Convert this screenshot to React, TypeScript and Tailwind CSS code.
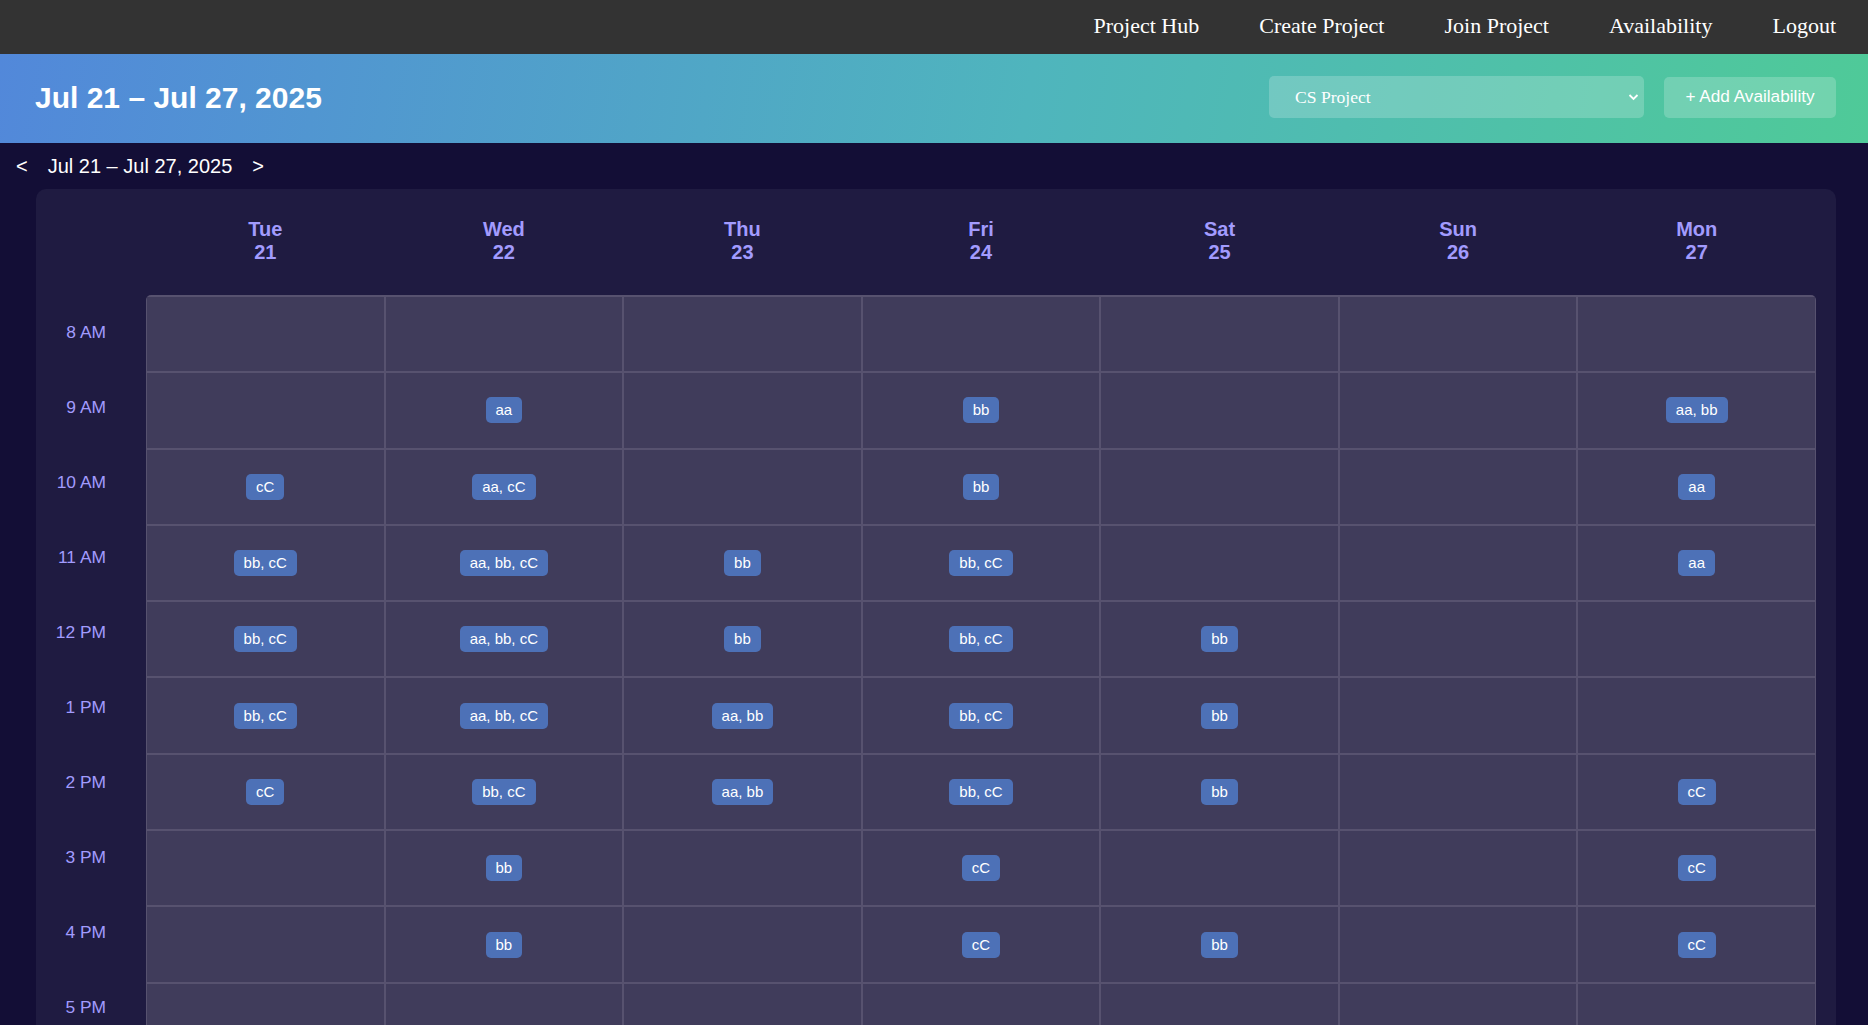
import { useState } from "react"

const days = [
  { name: "Tue", num: 21 },
  { name: "Wed", num: 22 },
  { name: "Thu", num: 23 },
  { name: "Fri", num: 24 },
  { name: "Sat", num: 25 },
  { name: "Sun", num: 26 },
  { name: "Mon", num: 27 },
]

const hours = ["8 AM", "9 AM", "10 AM", "11 AM", "12 PM", "1 PM", "2 PM", "3 PM", "4 PM", "5 PM", "6 PM", "7 PM"]

// who is free, per hour row, per day column (Tue..Mon)
const slots: string[][] = [
  ["", "", "", "", "", "", ""],
  ["", "aa", "", "bb", "", "", "aa, bb"],
  ["cC", "aa, cC", "", "bb", "", "", "aa"],
  ["bb, cC", "aa, bb, cC", "bb", "bb, cC", "", "", "aa"],
  ["bb, cC", "aa, bb, cC", "bb", "bb, cC", "bb", "", ""],
  ["bb, cC", "aa, bb, cC", "aa, bb", "bb, cC", "bb", "", ""],
  ["cC", "bb, cC", "aa, bb", "bb, cC", "bb", "", "cC"],
  ["", "bb", "", "cC", "", "", "cC"],
  ["", "bb", "", "cC", "bb", "", "cC"],
  ["", "", "", "", "", "", ""],
  ["", "", "", "", "", "", ""],
  ["", "", "", "", "", "", ""],
]

const navLinks = ["Project Hub", "Create Project", "Join Project", "Availability", "Logout"]

function NavBar() {
  return (
    <nav className="h-[54px] bg-[#333333] flex items-center justify-end gap-[60px] pr-[32px] pb-[4px] font-['Liberation_Serif',serif] text-[22px] text-white">
      {navLinks.map((l) => (
        <a key={l} className="cursor-pointer">{l}</a>
      ))}
    </nav>
  )
}

function Header() {
  return (
    <header className="h-[89px] bg-[linear-gradient(100deg,#5288da,#4fb5bd_55%,#4fca98)] flex items-center justify-between pl-[35px] pr-[32px] pb-[3px]">
      <h1 className="font-['Liberation_Sans',Arial,sans-serif] font-bold text-[30px] text-white">Jul 21 – Jul 27, 2025</h1>
      <div className="flex items-center gap-[20px]">
        <div className="relative w-[375px] h-[42px] rounded-[5px] bg-white/20 flex items-center pl-[26px] font-['Liberation_Serif',serif] text-[17.6px] text-white">
          CS Project
          <svg className="absolute right-[5px] top-1/2 -translate-y-1/2" width="11" height="8" viewBox="0 0 11 8">
            <path d="M1.5 2 L5.5 6 L9.5 2" fill="none" stroke="white" strokeWidth="1.8" />
          </svg>
        </div>
        <button className="w-[172px] h-[41px] rounded-[5px] bg-white/20 font-['Liberation_Sans',Arial,sans-serif] text-[17.2px] text-white">
          + Add Availability
        </button>
      </div>
    </header>
  )
}

function Chip({ label }: { label: string }) {
  return (
    <span className="px-[10px] py-[5px] leading-[16px] rounded-[5px] bg-[#4d71b7] text-white text-[15px] whitespace-nowrap">{label}</span>
  )
}

export default function App() {
  const [week] = useState("Jul 21 – Jul 27, 2025")

  return (
    <div className="min-h-screen bg-[#130e36] font-['Liberation_Sans',Arial,sans-serif]">
      <NavBar />
      <Header />
      <div className="h-[46px] flex items-center gap-[20px] pl-[16px] text-white text-[20px]">
        <button>&lt;</button>
        <span>{week}</span>
        <button>&gt;</button>
      </div>

      <div className="ml-[36px] mr-[32px] rounded-[10px] bg-[#1f1b41] pt-[29px] px-[20px] pb-[20px]">
        <div className="flex mb-[31px]">
          <div className="w-[90px] shrink-0" />
          <div className="flex-1 grid grid-cols-7 gap-[2px] px-px">
            {days.map((d) => (
              <div key={d.name} className="text-center font-bold text-[20px] leading-[23px] text-[#a29bfe]">
                <div>{d.name}</div>
                <div>{d.num}</div>
              </div>
            ))}
          </div>
        </div>

        <div className="flex">
          <div className="w-[90px] shrink-0 flex flex-col pr-[40px]">
            {hours.map((h) => (
              <div key={h} className="h-[75px] flex items-center justify-end whitespace-nowrap text-[17.4px] text-[#a29bfe]">
                {h}
              </div>
            ))}
          </div>
          <div className="flex-1 self-start grid grid-cols-7 gap-[2px] p-px pt-[2px] rounded-[5px] bg-[#57526f]">
            {slots.map((row, r) =>
              row.map((who, c) => (
                <div key={`${r}-${c}`} className="h-[74.3px] bg-[#403c5b] flex items-center justify-center">
                  {who && <Chip label={who} />}
                </div>
              ))
            )}
          </div>
        </div>
      </div>
    </div>
  )
}
